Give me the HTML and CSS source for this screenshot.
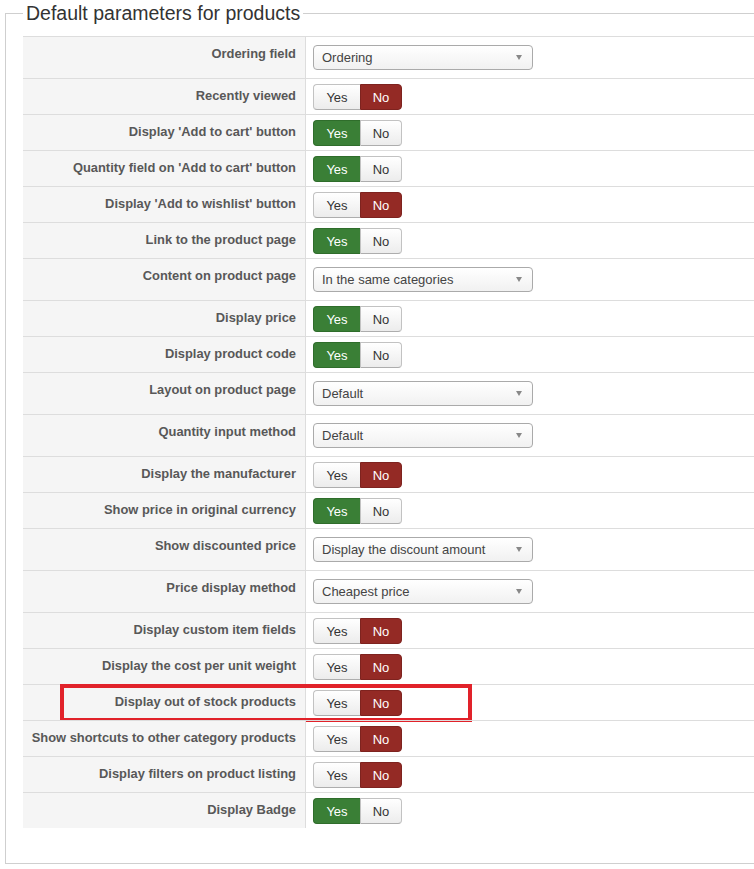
FILE: index.html
```html
<!DOCTYPE html>
<html>
<head>
<meta charset="utf-8">
<link rel="stylesheet" href="styles.css">
</head>
<body>
<fieldset class="panel">
  <legend class="panel-title">Default parameters for products</legend>
  <div class="params">
    <div class="row sel"><div class="lbl">Ordering field</div><div class="val"><div class="select">Ordering<span class="arrow"></span></div></div></div>
    <div class="row"><div class="lbl">Recently viewed</div><div class="val"><div class="toggle"><span class="yes">Yes</span><span class="no on-no">No</span></div></div></div>
    <div class="row"><div class="lbl">Display 'Add to cart' button</div><div class="val"><div class="toggle"><span class="yes on-yes">Yes</span><span class="no">No</span></div></div></div>
    <div class="row"><div class="lbl">Quantity field on 'Add to cart' button</div><div class="val"><div class="toggle"><span class="yes on-yes">Yes</span><span class="no">No</span></div></div></div>
    <div class="row"><div class="lbl">Display 'Add to wishlist' button</div><div class="val"><div class="toggle"><span class="yes">Yes</span><span class="no on-no">No</span></div></div></div>
    <div class="row"><div class="lbl">Link to the product page</div><div class="val"><div class="toggle"><span class="yes on-yes">Yes</span><span class="no">No</span></div></div></div>
    <div class="row sel"><div class="lbl">Content on product page</div><div class="val"><div class="select">In the same categories<span class="arrow"></span></div></div></div>
    <div class="row"><div class="lbl">Display price</div><div class="val"><div class="toggle"><span class="yes on-yes">Yes</span><span class="no">No</span></div></div></div>
    <div class="row"><div class="lbl">Display product code</div><div class="val"><div class="toggle"><span class="yes on-yes">Yes</span><span class="no">No</span></div></div></div>
    <div class="row sel"><div class="lbl">Layout on product page</div><div class="val"><div class="select">Default<span class="arrow"></span></div></div></div>
    <div class="row sel"><div class="lbl">Quantity input method</div><div class="val"><div class="select">Default<span class="arrow"></span></div></div></div>
    <div class="row"><div class="lbl">Display the manufacturer</div><div class="val"><div class="toggle"><span class="yes">Yes</span><span class="no on-no">No</span></div></div></div>
    <div class="row"><div class="lbl">Show price in original currency</div><div class="val"><div class="toggle"><span class="yes on-yes">Yes</span><span class="no">No</span></div></div></div>
    <div class="row sel"><div class="lbl">Show discounted price</div><div class="val"><div class="select">Display the discount amount<span class="arrow"></span></div></div></div>
    <div class="row sel"><div class="lbl">Price display method</div><div class="val"><div class="select">Cheapest price<span class="arrow"></span></div></div></div>
    <div class="row"><div class="lbl">Display custom item fields</div><div class="val"><div class="toggle"><span class="yes">Yes</span><span class="no on-no">No</span></div></div></div>
    <div class="row"><div class="lbl">Display the cost per unit weight</div><div class="val"><div class="toggle"><span class="yes">Yes</span><span class="no on-no">No</span></div></div></div>
    <div class="row marked"><div class="lbl">Display out of stock products</div><div class="val"><div class="toggle"><span class="yes">Yes</span><span class="no on-no">No</span></div></div><div class="highlight"></div></div>
    <div class="row"><div class="lbl">Show shortcuts to other category products</div><div class="val"><div class="toggle"><span class="yes">Yes</span><span class="no on-no">No</span></div></div></div>
    <div class="row"><div class="lbl">Display filters on product listing</div><div class="val"><div class="toggle"><span class="yes">Yes</span><span class="no on-no">No</span></div></div></div>
    <div class="row"><div class="lbl">Display Badge</div><div class="val"><div class="toggle"><span class="yes on-yes">Yes</span><span class="no">No</span></div></div></div>
  </div>
</fieldset>
</body>
</html>
```
FILE: styles.css
```css
html, body {
  margin: 0;
  padding: 0;
  background: #fff;
  overflow: hidden;
}
body {
  font-family: "Liberation Sans", Arial, sans-serif;
  font-size: 13px;
  color: #333;
}
.panel {
  margin: 2px 0 0 5px;
  width: 900px;
  border: 1px solid #cfcfcf;
  padding: 11px 0 35px 17px;
  box-sizing: border-box;
}
.panel-title {
  font-size: 19.5px;
  line-height: 23px;
  font-weight: normal;
  color: #333;
  padding: 0 3px;
  margin-left: 0;
}
.params {
  display: flex;
  flex-direction: column;
}
.row {
  display: grid;
  grid-template-columns: 283px 1fr;
  border-top: 1px solid #dddddd;
  position: relative;
}
.lbl {
  background: #f5f5f5;
  border-right: 1px solid #dddddd;
  text-align: right;
  font-weight: bold;
  font-size: 12.9px;
  color: #585858;
  line-height: 18px;
  padding: 8px 9px 0 0;
  white-space: nowrap;
}
.val {
  padding: 5px 0 4px 7px;
}
.row.sel .val {
  padding: 8px 0 8px 7px;
}
.toggle {
  display: flex;
  height: 26px;
}
.toggle span {
  display: flex;
  align-items: center;
  justify-content: center;
  box-sizing: border-box;
  height: 26px;
  font-size: 13px;
  color: #333;
  background: linear-gradient(#ffffff, #ececec);
  border: 1px solid #c2c2c2;
  border-bottom-color: #adadad;
}
.toggle .yes {
  width: 47px;
  border-radius: 4px 0 0 4px;
  border-right: none;
}
.toggle .no {
  width: 42px;
  border-radius: 0 4px 4px 0;
}
.toggle .on-yes {
  background: #3a7f36;
  border-color: #2f6d2b;
  color: #fff;
}
.toggle .on-no {
  background: #942a25;
  border-color: #7e231f;
  color: #fff;
}
.select {
  position: relative;
  box-sizing: border-box;
  width: 220px;
  height: 25px;
  line-height: 23px;
  padding-left: 8px;
  border: 1px solid #aaaaaa;
  border-radius: 4px;
  background: linear-gradient(#ffffff, #f1f1f1);
  color: #444;
  font-size: 13px;
}
.arrow {
  position: absolute;
  right: 10px;
  top: 9px;
  width: 0;
  height: 0;
  border-left: 3.5px solid transparent;
  border-right: 3.5px solid transparent;
  border-top: 5px solid #888;
}
.highlight {
  position: absolute;
  left: 37px;
  top: -1px;
  width: 412px;
  height: 38px;
  box-sizing: border-box;
  border: 4px solid #e1222a;
  pointer-events: none;
}
```
